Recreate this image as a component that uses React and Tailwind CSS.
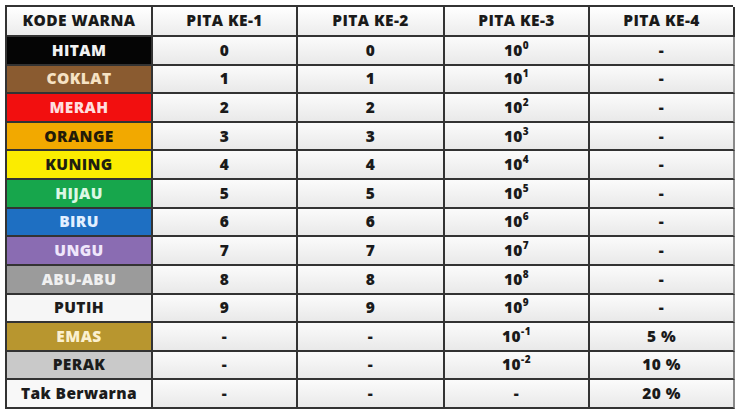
import React from "react";

const rows = [
  { name: "HITAM", bg: "bg-[#050505]", fg: "text-[#f2f2f2]", a: "0", b: "0", exp: "0", tol: "-" },
  { name: "COKLAT", bg: "bg-[#8a5b30]", fg: "text-[#f6e2c4]", a: "1", b: "1", exp: "1", tol: "-" },
  { name: "MERAH", bg: "bg-[#f20f0f]", fg: "text-[#ffdede]", a: "2", b: "2", exp: "2", tol: "-" },
  { name: "ORANGE", bg: "bg-[#f2a900]", fg: "text-[#231a08]", a: "3", b: "3", exp: "3", tol: "-" },
  { name: "KUNING", bg: "bg-[#fbec00]", fg: "text-[#1f1f10]", a: "4", b: "4", exp: "4", tol: "-" },
  { name: "HIJAU", bg: "bg-[#17a64c]", fg: "text-[#dcf7e4]", a: "5", b: "5", exp: "5", tol: "-" },
  { name: "BIRU", bg: "bg-[#1e6fc2]", fg: "text-[#e2efff]", a: "6", b: "6", exp: "6", tol: "-" },
  { name: "UNGU", bg: "bg-[#8a6cb2]", fg: "text-[#efe6fb]", a: "7", b: "7", exp: "7", tol: "-" },
  { name: "ABU-ABU", bg: "bg-[#9b9b9b]", fg: "text-[#f0f0f0]", a: "8", b: "8", exp: "8", tol: "-" },
  { name: "PUTIH", bg: "bg-[#f6f6f6]", fg: "text-[#1c1c1c]", a: "9", b: "9", exp: "9", tol: "-" },
  { name: "EMAS", bg: "bg-[#b8962f]", fg: "text-[#fbf0cf]", a: "-", b: "-", exp: "-1", tol: "5 %" },
  { name: "PERAK", bg: "bg-[#c9c9c9]", fg: "text-[#1c1c1c]", a: "-", b: "-", exp: "-2", tol: "10 %" },
  { name: "Tak Berwarna", bg: "bg-[#f8f8f8]", fg: "text-[#1c1c1c]", a: "-", b: "-", exp: null, tol: "20 %" },
];

const headers = ["KODE WARNA", "PITA KE-1", "PITA KE-2", "PITA KE-3", "PITA KE-4"];

const Cell = ({ children, className = "" }) => (
  <div
    className={`flex items-center justify-center border-r-2 border-b-2 border-[#333333] bg-gradient-to-b from-[#fbfbfb] to-[#e9e9e9] text-[#1a1a1a] ${className}`}
  >
    {children}
  </div>
);

const App = () => {
  return (
    <div className="w-[740px] h-[415px] bg-white pt-[5px] pl-[5px] font-['Open_Sans',sans-serif] font-extrabold text-[15.5px] tracking-[0.4px]">
      <div className="grid grid-cols-[146px_145px_147px_145px_145px] grid-rows-[30px_repeat(13,1fr)] w-[728px] h-[404px] border-t-2 border-l-2 border-[#333333]">
        {headers.map((h) => (
          <Cell key={h} className="bg-gradient-to-b from-[#ffffff] to-[#ececec]">
            {h}
          </Cell>
        ))}
        {rows.map((r) => (
          <React.Fragment key={r.name}>
            <div
              className={`flex items-center justify-center border-r-2 border-b-2 border-[#333333] ${r.bg} ${r.fg}`}
            >
              {r.name}
            </div>
            <Cell>{r.a}</Cell>
            <Cell>{r.b}</Cell>
            <Cell>
              {r.exp === null ? (
                "-"
              ) : (
                <span>
                  10<sup className="text-[10px] relative -top-[7px] align-baseline">{r.exp}</sup>
                </span>
              )}
            </Cell>
            <Cell className="border-r-[#8a8a8a]">{r.tol}</Cell>
          </React.Fragment>
        ))}
      </div>
    </div>
  );
};

export default App;
